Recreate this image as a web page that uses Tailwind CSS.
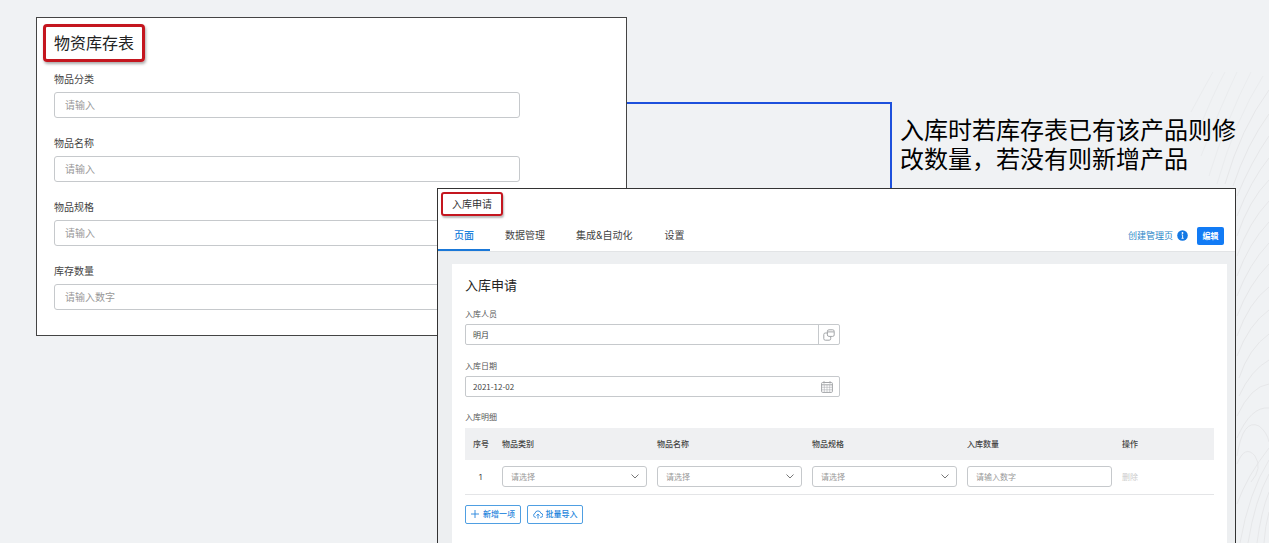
<!DOCTYPE html>
<html lang="zh-CN">
<head>
<meta charset="utf-8">
<meta name="viewport" content="width=device-width, initial-scale=1">
<title>物资库存表 / 入库申请</title>
<script src="https://cdn.jsdelivr.net/npm/@tailwindcss/browser@4"></script>
</head>
<body class="bg-[#f0f2f4] font-['Inter','Noto_Sans_CJK_SC',sans-serif] text-[#444]">
<main class="relative min-h-screen overflow-hidden">

  <!-- Contour line texture -->
  <svg class="absolute right-0 top-[72px]" width="140" height="471" viewBox="0 0 140 471" fill="none" stroke="#e6e7e9" aria-hidden="true">
    <g stroke="#eaecee">
      <path d="M62 40Q76 14 84 0M68 62Q84 22 96 0M72 84Q92 34 108 0M80 104Q98 46 122 0M88 112Q106 48 134 4"/>
    </g>
    <path d="M96 112Q112 56 140 18M104 114Q118 72 140 42M108 124Q122 90 140 64M108 144Q122 108 140 86M108 164Q120 128 140 108M108 184Q120 150 140 129M108 204Q120 171 140 150M108 224Q120 192 140 171M108 244Q120 212 140 192M108 264Q120 230 140 215M108 284Q120 252 140 238M110 306Q120 276 140 262M110 324Q122 298 140 288M108 344Q122 314 140 312M108 366Q122 334 140 336M108 384Q114 346 130 354Q138 360 140 370M108 392Q116 372 126 384Q134 396 122 410"/>
    <path d="M140 376Q118 404 108 432M140 388Q120 420 111 471M140 402Q126 428 119 471M140 420Q132 440 128 471M140 440Q136 454 135 471"/>
  </svg>

  <!-- Connector between the two forms -->
  <div class="absolute left-[627px] right-[377px] top-[102px] h-[90px] border-r-2 border-t-2 border-[#1d50dc]" aria-hidden="true"></div>

  <p class="absolute left-[900px] right-[30px] top-[116px] text-2xl leading-[29px] text-black">入库时若库存表已有该产品则修改数量，若没有则新增产品</p>

  <!-- Stock form -->
  <section class="absolute left-[36px] right-[642px] top-[17px] border border-[#444] bg-white pb-[25px] pl-[17px] pr-[106px] pt-[6px]">
    <h1 class="-ml-[11px] inline-flex h-[38px] items-center rounded border-3 border-[#c4161f] px-2 text-base text-[#222] shadow-[1px_2px_3px_#0005]">物资库存表</h1>
    <form class="mt-[9px] flex flex-col gap-[17px] text-[10px]">
      <div class="flex flex-col gap-[5px]">
        <label for="category" class="leading-4 text-[#444]">物品分类</label>
        <input id="category" placeholder="请输入" class="h-[26px] rounded-[3px] border border-[#c6c9cc] px-[10px] placeholder:text-[#999]">
      </div>
      <div class="flex flex-col gap-[5px]">
        <label for="name" class="leading-4 text-[#444]">物品名称</label>
        <input id="name" placeholder="请输入" class="h-[26px] rounded-[3px] border border-[#c6c9cc] px-[10px] placeholder:text-[#999]">
      </div>
      <div class="flex flex-col gap-[5px]">
        <label for="spec" class="leading-4 text-[#444]">物品规格</label>
        <input id="spec" placeholder="请输入" class="h-[26px] rounded-[3px] border border-[#c6c9cc] px-[10px] placeholder:text-[#999]">
      </div>
      <div class="flex flex-col gap-[5px]">
        <label for="stock" class="leading-4 text-[#444]">库存数量</label>
        <input id="stock" placeholder="请输入数字" class="h-[26px] rounded-[3px] border border-[#c6c9cc] px-[10px] placeholder:text-[#999]">
      </div>
    </form>
  </section>

  <!-- Inbound request window -->
  <section class="absolute bottom-0 left-[437px] right-[33px] top-[188px] flex flex-col border border-b-0 border-[#333] bg-[#edeff1]">
    <header class="border-b border-[#e2e4e6] bg-white">
      <h2 class="ml-[3px] mt-[3px] inline-flex h-6 items-center rounded-[3px] border-2 border-[#c4161f] px-[9px] text-[10px] text-[#333] shadow-[1px_2px_2px_#0004]">入库申请</h2>
      <div class="flex items-stretch justify-between pr-[11px]">
        <nav class="flex h-[35px] text-[10px] leading-[38px] text-[#444]">
          <a href="#page" class="border-b-2 border-[#1a78d8] px-4 leading-[38px] font-medium text-[#1f82dc]">页面</a>
          <a href="#data" class="px-[15px]">数据管理</a>
          <a href="#auto" class="px-4">集成&amp;自动化</a>
          <a href="#settings" class="px-4">设置</a>
        </nav>
        <div class="flex items-center pt-1">
          <a href="#manage" class="text-[9px] text-[#2a86c8]">创建管理页</a>
          <svg class="ml-1 mr-[9px]" width="11" height="11" viewBox="0 0 11 11" aria-hidden="true"><circle cx="5.500" cy="5.500" r="5.300" fill="#1378e4"/><circle cx="5.500" cy="3" r=".9" fill="#fff"/><path d="M4.600 4.800h1v3.400M4.500 8.300h2.200" fill="none" stroke="#fff" stroke-width=".9"/></svg>
          <button class="h-[18px] w-[27px] rounded-[2px] bg-[#127bf5] text-[8px] font-bold text-white">编辑</button>
        </div>
      </div>
    </header>

    <div class="ml-[14px] mr-2 mt-3 flex-1 bg-white px-[13px] pt-3">
      <h3 class="text-[13px] leading-[18px] text-[#222]">入库申请</h3>

      <div class="mt-[14px] w-1/2 text-[8px]">
        <label for="person" class="block h-4 leading-3 text-[#555]">入库人员</label>
        <div class="flex h-[21px] rounded-[2px] border border-[#c6c9cc]">
          <input id="person" value="明月" class="min-w-0 flex-1 px-[7px]">
          <button type="button" aria-label="选择人员" class="flex w-[21px] items-center justify-center border-l border-[#c6c9cc]">
            <svg width="12" height="12" viewBox="0 0 12 12" fill="none" stroke="#a3a5a8"><rect x="4.400" y=".8" width="6.800" height="6.600" rx="1.500"/><path d="M4.600 2.900H11M4.400 4H2.300Q.8 4 .8 5.500V9.700Q.8 11.200 2.300 11.200H6.200Q7.700 11.200 7.700 9.700V7.500"/></svg>
          </button>
        </div>
      </div>

      <div class="mt-[15px] w-1/2 text-[8px]">
        <label for="date" class="block h-4 leading-3 text-[#555]">入库日期</label>
        <div class="flex h-[21px] items-center rounded-[2px] border border-[#c6c9cc] pr-[6px]">
          <input id="date" value="2021-12-02" class="min-w-0 flex-1 px-[7px] font-['Noto_Sans_CJK_SC',sans-serif]">
          <svg width="12" height="12" viewBox="0 0 12 12" fill="none" stroke="#a3a5a8" aria-hidden="true"><rect x=".6" y="1.500" width="10.800" height="9.900" rx="1"/><path d="M.6 3.800H11.400M3 .2V2.500M9 .2V2.500"/><path d="M1 6.300H11M1 8.800H11M3.300 4V11M6 4V11M8.700 4V11" stroke-width=".5"/></svg>
        </div>
      </div>

      <h4 class="mt-[14px] h-[17px] text-[8px] leading-3 text-[#555]">入库明细</h4>
      <table class="w-full table-fixed text-left text-[8px]">
        <colgroup><col class="w-[37px]"><col class="w-[155px]"><col class="w-[155px]"><col class="w-[155px]"><col class="w-[155px]"><col></colgroup>
        <thead class="bg-[#eff0f2]">
          <tr class="h-8">
            <th class="pl-2 font-medium">序号</th>
            <th class="font-medium">物品类别</th>
            <th class="font-medium">物品名称</th>
            <th class="font-medium">物品规格</th>
            <th class="font-medium">入库数量</th>
            <th class="font-medium">操作</th>
          </tr>
        </thead>
        <tbody>
          <tr class="h-[34px] border-b border-[#e4e5e7]">
            <td class="pr-[6px] text-center">1</td>
            <td class="pr-[10px]">
              <div class="grid items-center">
                <select aria-label="物品类别" class="col-start-1 row-start-1 h-[21px] w-full appearance-none rounded-[3px] border border-[#c6c9cc] px-2 text-[#999]"><option>请选择</option></select>
                <svg class="pointer-events-none col-start-1 row-start-1 mr-2 justify-self-end" width="8" height="5" viewBox="0 0 8 5" fill="none" stroke="#777"><path d="M.5 .5L4 4L7.500 .5"/></svg>
              </div>
            </td>
            <td class="pr-[10px]">
              <div class="grid items-center">
                <select aria-label="物品名称" class="col-start-1 row-start-1 h-[21px] w-full appearance-none rounded-[3px] border border-[#c6c9cc] px-2 text-[#999]"><option>请选择</option></select>
                <svg class="pointer-events-none col-start-1 row-start-1 mr-2 justify-self-end" width="8" height="5" viewBox="0 0 8 5" fill="none" stroke="#777"><path d="M.5 .5L4 4L7.500 .5"/></svg>
              </div>
            </td>
            <td class="pr-[10px]">
              <div class="grid items-center">
                <select aria-label="物品规格" class="col-start-1 row-start-1 h-[21px] w-full appearance-none rounded-[3px] border border-[#c6c9cc] px-2 text-[#999]"><option>请选择</option></select>
                <svg class="pointer-events-none col-start-1 row-start-1 mr-2 justify-self-end" width="8" height="5" viewBox="0 0 8 5" fill="none" stroke="#777"><path d="M.5 .5L4 4L7.500 .5"/></svg>
              </div>
            </td>
            <td class="pr-[10px]"><input aria-label="入库数量" placeholder="请输入数字" class="block h-[21px] w-full rounded-[3px] border border-[#c6c9cc] px-2 placeholder:text-[#999]"></td>
            <td><button type="button" disabled class="text-[#ccc]">删除</button></td>
          </tr>
        </tbody>
      </table>

      <div class="mt-[10px] flex gap-[6px] text-[8px] font-medium text-[#2585dc]">
        <button type="button" class="flex h-[19px] w-14 items-center justify-center gap-1 rounded-[2px] border border-[#4f9fe2]">
          <svg width="8" height="8" viewBox="0 0 8 8" stroke="currentColor" stroke-width=".9" aria-hidden="true"><path d="M4 0V8M0 4H8"/></svg>新增一项
        </button>
        <button type="button" class="flex h-[19px] w-14 items-center justify-center gap-[3px] rounded-[2px] border border-[#4f9fe2]">
          <svg width="10" height="9" viewBox="0 0 10 9" fill="none" stroke="currentColor" stroke-width=".9" aria-hidden="true"><path d="M3 7.300H2.500A2 2 0 0 1 2 3.400A3 3 0 0 1 7.900 3.300A2 2 0 0 1 7.600 7.300H7M5 8.700V4.200M3.500 5.600L5 4.100L6.500 5.600"/></svg>批量导入
        </button>
      </div>
    </div>
  </section>
</main>
</body>
</html>
